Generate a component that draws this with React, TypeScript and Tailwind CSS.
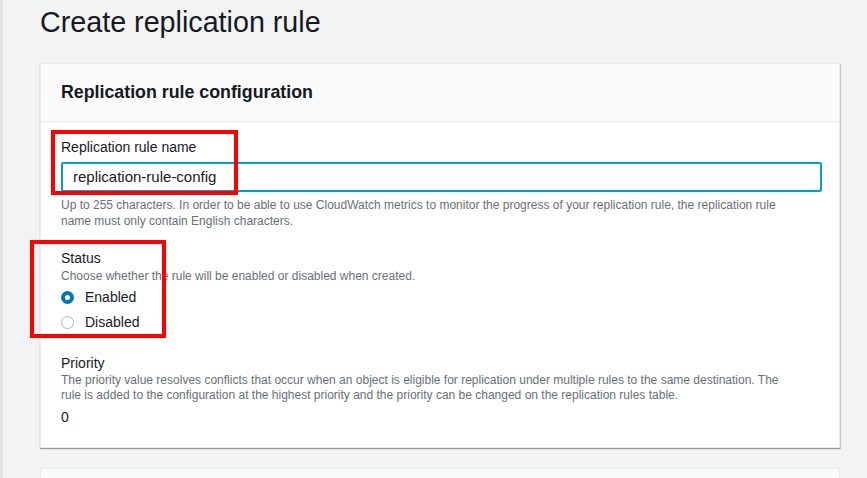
import React from 'react';

function Radio({ checked, label }: { checked?: boolean; label: string }) {
  return (
    <label className="flex items-center h-[25px] gap-[11px]">
      {checked ? (
        <span className="w-[13px] h-[13px] rounded-full bg-[#0073bb] flex items-center justify-center">
          <span className="w-[5px] h-[5px] rounded-full bg-white"></span>
        </span>
      ) : (
        <span className="w-[13px] h-[13px] rounded-full border border-[#aab7b8] bg-white"></span>
      )}
      <span className="text-[14px] text-[#16191f]">{label}</span>
    </label>
  );
}

export default function App() {
  return (
    <div
      className="h-screen bg-[#f2f3f3] border-l-[3px] border-[#e3e6e6] pl-[37px] pr-[27px] overflow-hidden"
      style={{ fontFamily: '"Liberation Sans", Arial, sans-serif' }}
    >
      <h1 className="text-[28.7px] leading-[44px] text-[#16191f] font-normal">Create replication rule</h1>

      <section className="relative mt-[19px] w-[800px] bg-white border border-[#eaeded] shadow-[0_1px_1px_0_rgba(0,28,36,0.3),1px_1px_1px_0_rgba(0,28,36,0.15)]">
        <div className="h-[58px] bg-[#fafafa] border-b border-[#eaeded] px-[20px] flex items-center">
          <h2 className="text-[17.8px] font-bold text-[#16191f]">Replication rule configuration</h2>
        </div>

        <div className="px-[20px] pt-[15px] pb-[20px]">
          <div className="text-[14px] leading-[20px] text-[#16191f]">Replication rule name</div>
          <div className="mt-[5px] h-[30px] w-[761px] border-2 border-[#00a1c9] rounded-[2px] flex items-center pl-[10px] text-[15px] text-[#16191f]">
            replication-rule-config
          </div>
          <p className="mt-[5px] text-[12px] leading-[16px] text-[#687078] pr-[20px]">
            Up to 255 characters. In order to be able to use CloudWatch metrics to monitor the progress of your replication rule, the replication rule name must only contain English characters.
          </p>

          <div className="mt-[19px] text-[14px] leading-[20px] text-[#16191f]">Status</div>
          <p className="text-[12px] leading-[16px] text-[#687078]">Choose whether the rule will be enabled or disabled when created.</p>
          <div className="mt-[1px]">
            <Radio checked label="Enabled" />
            <Radio label="Disabled" />
          </div>

          <div className="mt-[18px] text-[14px] leading-[20px] text-[#16191f]">Priority</div>
          <p className="text-[12px] leading-[15px] text-[#687078] pr-[22px]">
            The priority value resolves conflicts that occur when an object is eligible for replication under multiple rules to the same destination. The rule is added to the configuration at the highest priority and the priority can be changed on the replication rules table.
          </p>
          <div className="mt-[4px] text-[14px] leading-[20px] text-[#16191f]">0</div>
        </div>

        <div className="absolute left-[10px] top-[66px] w-[187px] h-[65px] border-4 border-[#ff0000]"></div>
        <div className="absolute left-[-11px] top-[176px] w-[136px] h-[98px] border-4 border-[#ff0000]"></div>
      </section>

      <section className="mt-[20px] w-[800px] h-[60px] bg-[#fafafa] border border-[#eaeded]"></section>
    </div>
  );
}
